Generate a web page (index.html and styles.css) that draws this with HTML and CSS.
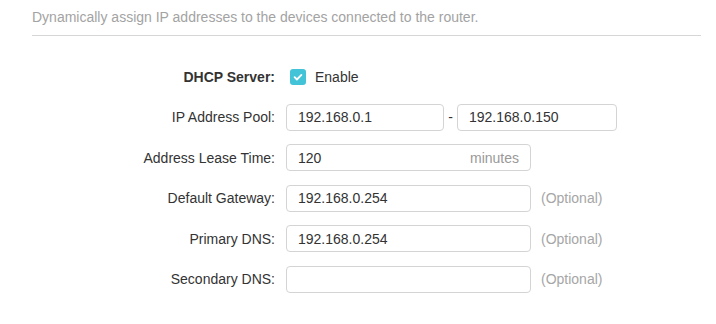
FILE: index.html
```html
<!DOCTYPE html>
<html lang="en">
<head>
  <meta charset="UTF-8">
  <title>DHCP Server</title>
  <link rel="stylesheet" href="styles.css">
</head>
<body>
  <div class="panel">
    <p class="desc">Dynamically assign IP addresses to the devices connected to the router.</p>
    <div class="form">
      <div class="row row-check">
        <label class="label bold">DHCP Server:</label>
        <span class="check">
          <svg width="16" height="16" viewBox="0 0 16 16"><rect width="16" height="16" rx="3" fill="#42c3d8"/><path d="M4.6 8.2l2.3 2.3 4.5-4.6" fill="none" stroke="#fff" stroke-width="1.8" stroke-linecap="round" stroke-linejoin="round"/></svg>
        </span>
        <span class="check-text">Enable</span>
      </div>
      <div class="row">
        <label class="label">IP Address Pool:</label>
        <div class="input short">192.168.0.1</div>
        <span class="dash">-</span>
        <div class="input short2">192.168.0.150</div>
      </div>
      <div class="row">
        <label class="label">Address Lease Time:</label>
        <div class="input wide"><span>120</span><span class="unit">minutes</span></div>
      </div>
      <div class="row">
        <label class="label">Default Gateway:</label>
        <div class="input wide">192.168.0.254</div>
        <span class="hint">(Optional)</span>
      </div>
      <div class="row">
        <label class="label">Primary DNS:</label>
        <div class="input wide">192.168.0.254</div>
        <span class="hint">(Optional)</span>
      </div>
      <div class="row">
        <label class="label">Secondary DNS:</label>
        <div class="input wide"></div>
        <span class="hint">(Optional)</span>
      </div>
    </div>
  </div>
</body>
</html>
```

FILE: styles.css
```css
* { margin: 0; padding: 0; box-sizing: border-box; }
body {
  background: #fff;
  font-family: "Liberation Sans", Arial, sans-serif;
  font-size: 14px;
  color: #333;
}
.panel {
  margin-left: 32px;
  width: 669px;
}
.desc {
  color: #a3a3a3;
  line-height: 20px;
  padding: 7px 0 8px;
  border-bottom: 1px solid #d6d6d6;
}
.form {
  padding-top: 28px;
  display: flex;
  flex-direction: column;
  gap: 13.5px;
}
.row {
  display: flex;
  align-items: center;
  height: 27px;
}
.row-check { height: 26px; }
.label {
  width: 243px;
  text-align: right;
  margin-right: 11px;
  color: #333;
}
.bold { font-weight: bold; }
.check {
  display: flex;
  margin-left: 4px;
  margin-right: 9px;
}
.check-text { color: #333; }
.input {
  height: 27px;
  border: 1px solid #d4d4d4;
  border-radius: 4px;
  padding: 0 11px;
  display: flex;
  align-items: center;
  justify-content: space-between;
  color: #333;
}
.short { width: 158px; }
.short2 { width: 160px; }
.wide { width: 245px; }
.dash {
  width: 13px;
  text-align: center;
}
.unit {
  color: #999;
}
.hint {
  margin-left: 10px;
  color: #a6a6a6;
}
```
